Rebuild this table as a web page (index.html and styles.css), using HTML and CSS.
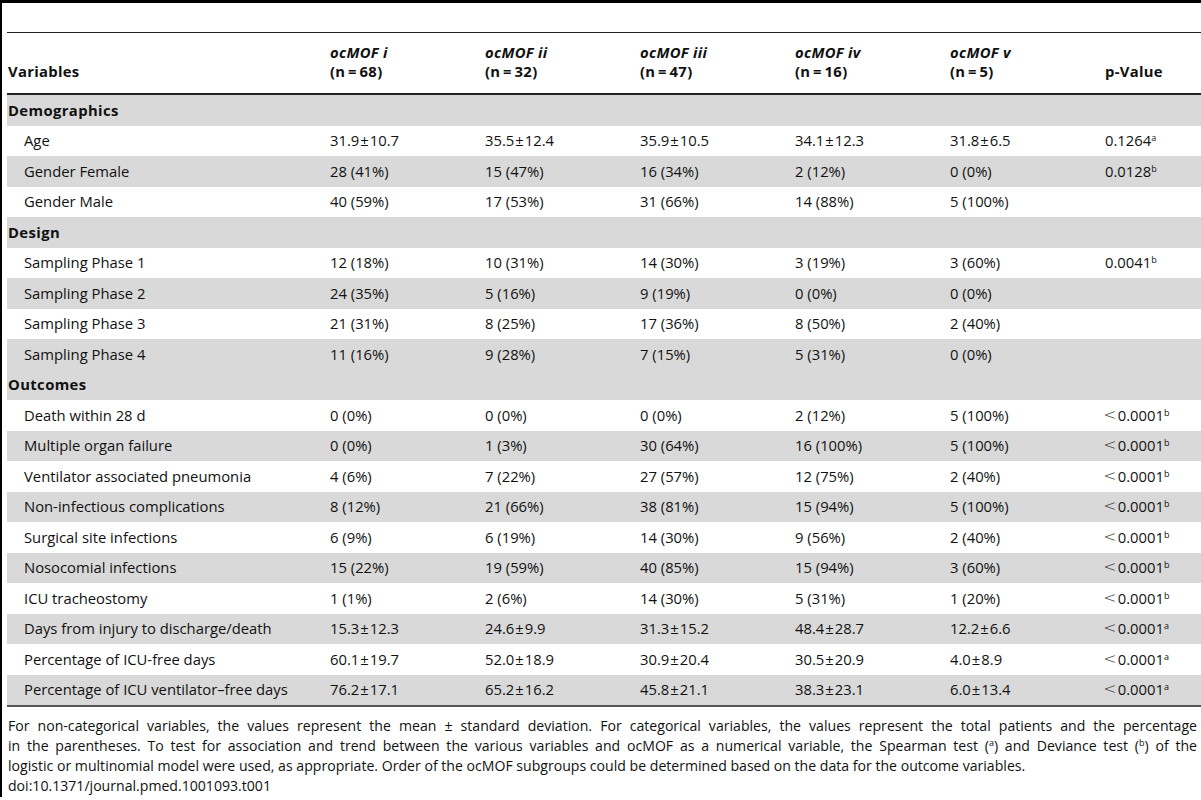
FILE: index.html
```html
<!DOCTYPE html>
<html>
<head>
<meta charset="utf-8">
<link rel="stylesheet" href="styles.css">
</head>
<body>
<div class="frame">
  <div class="inner">
    <div class="spacer"></div>
    <table class="data">
      <colgroup>
        <col class="c-label"><col class="c-num"><col class="c-num"><col class="c-num"><col class="c-num"><col class="c-num"><col class="c-p">
      </colgroup>
      <thead>
        <tr>
          <th class="lab">Variables</th>
          <th><i>ocMOF i</i><br>(n&#8201;=&#8201;68)</th>
          <th><i>ocMOF ii</i><br>(n&#8201;=&#8201;32)</th>
          <th><i>ocMOF iii</i><br>(n&#8201;=&#8201;47)</th>
          <th><i>ocMOF iv</i><br>(n&#8201;=&#8201;16)</th>
          <th><i>ocMOF v</i><br>(n&#8201;=&#8201;5)</th>
          <th>p-Value</th>
        </tr>
      </thead>
      <tbody>
        <tr class="g sec"><td colspan="7">Demographics</td></tr>
        <tr><td class="sub">Age</td><td>31.9<span class="pm">±</span>10.7</td><td>35.5<span class="pm">±</span>12.4</td><td>35.9<span class="pm">±</span>10.5</td><td>34.1<span class="pm">±</span>12.3</td><td>31.8<span class="pm">±</span>6.5</td><td>0.1264<sup>a</sup></td></tr>
        <tr class="g"><td class="sub">Gender Female</td><td>28 (41%)</td><td>15 (47%)</td><td>16 (34%)</td><td>2 (12%)</td><td>0 (0%)</td><td>0.0128<sup>b</sup></td></tr>
        <tr><td class="sub">Gender Male</td><td>40 (59%)</td><td>17 (53%)</td><td>31 (66%)</td><td>14 (88%)</td><td>5 (100%)</td><td></td></tr>
        <tr class="g sec"><td colspan="7">Design</td></tr>
        <tr><td class="sub">Sampling Phase 1</td><td>12 (18%)</td><td>10 (31%)</td><td>14 (30%)</td><td>3 (19%)</td><td>3 (60%)</td><td>0.0041<sup>b</sup></td></tr>
        <tr class="g"><td class="sub">Sampling Phase 2</td><td>24 (35%)</td><td>5 (16%)</td><td>9 (19%)</td><td>0 (0%)</td><td>0 (0%)</td><td></td></tr>
        <tr><td class="sub">Sampling Phase 3</td><td>21 (31%)</td><td>8 (25%)</td><td>17 (36%)</td><td>8 (50%)</td><td>2 (40%)</td><td></td></tr>
        <tr class="g"><td class="sub">Sampling Phase 4</td><td>11 (16%)</td><td>9 (28%)</td><td>7 (15%)</td><td>5 (31%)</td><td>0 (0%)</td><td></td></tr>
        <tr class="g sec"><td colspan="7">Outcomes</td></tr>
        <tr><td class="sub">Death within 28 d</td><td>0 (0%)</td><td>0 (0%)</td><td>0 (0%)</td><td>2 (12%)</td><td>5 (100%)</td><td><span class="lt">&lt;</span>0.0001<sup>b</sup></td></tr>
        <tr class="g"><td class="sub">Multiple organ failure</td><td>0 (0%)</td><td>1 (3%)</td><td>30 (64%)</td><td>16 (100%)</td><td>5 (100%)</td><td><span class="lt">&lt;</span>0.0001<sup>b</sup></td></tr>
        <tr><td class="sub">Ventilator associated pneumonia</td><td>4 (6%)</td><td>7 (22%)</td><td>27 (57%)</td><td>12 (75%)</td><td>2 (40%)</td><td><span class="lt">&lt;</span>0.0001<sup>b</sup></td></tr>
        <tr class="g"><td class="sub">Non-infectious complications</td><td>8 (12%)</td><td>21 (66%)</td><td>38 (81%)</td><td>15 (94%)</td><td>5 (100%)</td><td><span class="lt">&lt;</span>0.0001<sup>b</sup></td></tr>
        <tr><td class="sub">Surgical site infections</td><td>6 (9%)</td><td>6 (19%)</td><td>14 (30%)</td><td>9 (56%)</td><td>2 (40%)</td><td><span class="lt">&lt;</span>0.0001<sup>b</sup></td></tr>
        <tr class="g"><td class="sub">Nosocomial infections</td><td>15 (22%)</td><td>19 (59%)</td><td>40 (85%)</td><td>15 (94%)</td><td>3 (60%)</td><td><span class="lt">&lt;</span>0.0001<sup>b</sup></td></tr>
        <tr><td class="sub">ICU tracheostomy</td><td>1 (1%)</td><td>2 (6%)</td><td>14 (30%)</td><td>5 (31%)</td><td>1 (20%)</td><td><span class="lt">&lt;</span>0.0001<sup>b</sup></td></tr>
        <tr class="g"><td class="sub">Days from injury to discharge/death</td><td>15.3<span class="pm">±</span>12.3</td><td>24.6<span class="pm">±</span>9.9</td><td>31.3<span class="pm">±</span>15.2</td><td>48.4<span class="pm">±</span>28.7</td><td>12.2<span class="pm">±</span>6.6</td><td><span class="lt">&lt;</span>0.0001<sup>a</sup></td></tr>
        <tr><td class="sub">Percentage of ICU-free days</td><td>60.1<span class="pm">±</span>19.7</td><td>52.0<span class="pm">±</span>18.9</td><td>30.9<span class="pm">±</span>20.4</td><td>30.5<span class="pm">±</span>20.9</td><td>4.0<span class="pm">±</span>8.9</td><td><span class="lt">&lt;</span>0.0001<sup>a</sup></td></tr>
        <tr class="g"><td class="sub">Percentage of ICU ventilator–free days</td><td>76.2<span class="pm">±</span>17.1</td><td>65.2<span class="pm">±</span>16.2</td><td>45.8<span class="pm">±</span>21.1</td><td>38.3<span class="pm">±</span>23.1</td><td>6.0<span class="pm">±</span>13.4</td><td><span class="lt">&lt;</span>0.0001<sup>a</sup></td></tr>
      </tbody>
    </table>
    <div class="note">
      <span class="line just">For non-categorical variables, the values represent the mean ± standard deviation. For categorical variables, the values represent the total patients and the percentage</span>
      <span class="line just">in the parentheses. To test for association and trend between the various variables and ocMOF as a numerical variable, the Spearman test (<sup>a</sup>) and Deviance test (<sup>b</sup>) of the</span>
      <span class="line">logistic or multinomial model were used, as appropriate. Order of the ocMOF subgroups could be determined based on the data for the outcome variables.</span>
      <span class="line">doi:10.1371/journal.pmed.1001093.t001</span>
    </div>
  </div>
</div>
</body>
</html>
```
FILE: styles.css
```css
html, body {
  margin: 0;
  padding: 0;
  background: #fff;
}
body {
  font-family: "Open Sans", "Noto Sans", sans-serif;
  font-size: 14.8px;
  color: #111;
}
.frame {
  border-top: 3px solid #000;
  border-left: 2px solid #000;
  height: 797px;
  box-sizing: border-box;
  overflow: hidden;
}
.inner {
  padding-left: 5px;
}
.spacer {
  height: 29px;
}
.data {
  width: 1194px;
  border-collapse: collapse;
  table-layout: fixed;
}
.c-label { width: 323px; }
.c-num { width: 155px; }
.c-p { width: 96px; }
.data thead tr {
  border-top: 1px solid #222;
  border-bottom: 2px solid #222;
}
.data th {
  text-align: left;
  vertical-align: bottom;
  font-weight: bold;
  line-height: 19px;
  padding: 0 0 12px 0;
  height: 48px;
  letter-spacing: 0.3px;
}
.data th i {
  font-style: italic;
}
.data th.lab {
  padding-left: 1px;
}
.data td {
  padding: 0;
  height: 30.5px;
  line-height: 19px;
  white-space: nowrap;
  vertical-align: middle;
}
.data tr.g td {
  background: #d9d9d9;
}
.data tr.sec td {
  font-weight: bold;
  padding-left: 1px;
  letter-spacing: 0.4px;
}
.data td.sub {
  padding-left: 17px;
}
.data tbody tr:last-child {
  border-bottom: 2px solid #555;
}
.pm {
  margin: 0 1px;
}
.lt {
  display: inline-block;
  font-size: 17px;
  line-height: 0;
  transform: scaleX(1.25);
  margin-right: 3px;
  font-weight: 300;
  color: #333;
}
sup {
  font-size: 9px;
  line-height: 0;
  vertical-align: 5px;
}
.note {
  margin: 9px 0 0 1px;
  width: 1189px;
  font-size: 14.1px;
  line-height: 20px;
}
.note .line {
  display: block;
  white-space: nowrap;
}
.note .line.just {
  white-space: normal;
  text-align: justify;
  text-align-last: justify;
}
```
